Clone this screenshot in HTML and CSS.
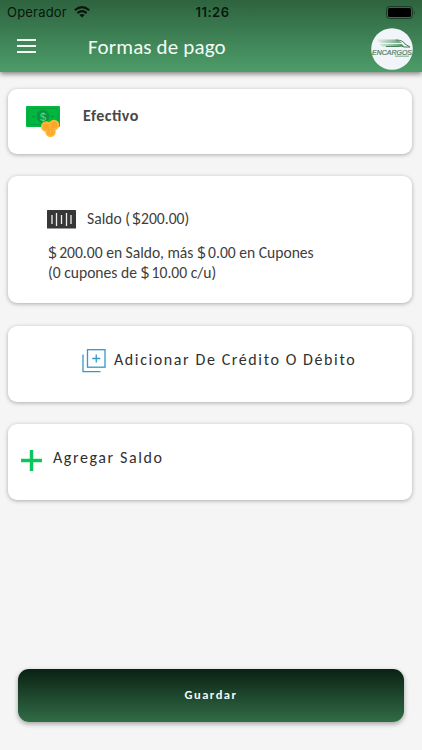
FILE: index.html
```html
<!DOCTYPE html>
<html lang="es">
<head>
<meta charset="utf-8">
<title>Formas de pago</title>
<link rel="stylesheet" href="styles.css">
</head>
<body>
<header class="header">
  <div class="status">
    <div class="carrier"><span>Operador</span>
      <svg width="16" height="12" viewBox="0 0 16 12"><g fill="none" stroke="#07170d" stroke-width="2.1"><path d="M.8 4.3Q8-2 15.2 4.3"/><path d="M3.4 7.1Q8 3.2 12.6 7.1"/></g><path d="M5.4 9Q8 7 10.6 9L8 11.6Z" fill="#07170d"/></svg>
    </div>
    <time class="clock">11:26</time>
    <svg class="battery" width="30" height="13" viewBox="0 0 30 13"><rect x=".5" y=".5" width="26" height="12" rx="3" fill="none" stroke="#173d25"/><rect x="2" y="2" width="23" height="9" rx="1.6" fill="#000"/><path d="M28 4.5Q29.5 6.5 28 8.5Z" fill="#173d25"/></svg>
  </div>
  <div class="toolbar">
    <svg class="menu" width="19" height="14" viewBox="0 0 19 14"><path d="M0 1H19M0 7H19M0 13H19" stroke="#f2fbf4" stroke-width="1.8"/></svg>
    <h1 class="title">Formas de pago</h1>
    <svg class="logo" width="42" height="42" viewBox="0 0 42 42">
      <defs><linearGradient id="speed"><stop offset="0" stop-color="#69a577" stop-opacity=".1"/><stop offset="1" stop-color="#559665"/></linearGradient></defs>
      <circle cx="21" cy="21" r="20.8" fill="#f1f5fa"/>
      <path d="M6 11.5H26L31 15H9V13.5H7ZM9 16H31L33 18.5H11V17.5H9Z" fill="url(#speed)"/>
      <path d="M25 12Q32 12 34 16L39 19H33Q30 17 27 18.5H15" fill="none" stroke="#467e57" stroke-width="1"/>
      <text class="logo-name" x="1" y="26.7" textLength="40" lengthAdjust="spacingAndGlyphs">ENCARGOS</text>
      <path d="M24 28.2H38" stroke="#88b799" stroke-width="1.2"/>
    </svg>
  </div>
</header>
<main class="content">
  <section class="card cash">
    <svg width="36" height="33" viewBox="0 0 36 33"><rect x="1" y="1" width="34" height="21" rx="1" fill="#00b83f"/><path d="M4.5 3.5H31.5Q31.5 5.500 33 6V17Q31.500 17.500 31.500 19.500H4.500Q4.500 17.500 3 17V6Q4.500 5.500 4.500 3.500Z" fill="none" stroke="#079c3b" stroke-width=".8"/><circle cx="18" cy="11.300" r="6.500" fill="#07983b"/><circle cx="8.500" cy="11.300" r="1.200" fill="#07983b"/><circle cx="27.500" cy="11.300" r="1.200" fill="#07983b"/><text class="note-sign" x="18" y="15.500">$</text><g fill="#ffb632"><circle cx="29" cy="20" r="5.300"/><circle cx="21.300" cy="21.500" r="5.300"/><circle cx="25.500" cy="26.700" r="5.300"/></g><g fill="#fda52d"><circle cx="29" cy="20" r="3.200"/><circle cx="21.300" cy="21.500" r="3.200"/><circle cx="25.500" cy="26.700" r="3.200"/></g><path d="M25.500 25V29" stroke="#ffc04a"/></svg>
    <h2 class="label cash-label">Efectivo</h2>
  </section>
  <section class="card balance">
    <div class="balance-head">
      <svg width="30" height="19" viewBox="0 0 30 19"><rect width="29" height="18.500" rx=".5" fill="#373738"/><path d="M5 5V14M9.500 3V16M14.500 5V14M19.500 3V16M24 5V14" stroke="#eee" stroke-width="1.300"/></svg>
      <span class="text saldo">Saldo (<b class="cur">$</b>200.00)</span>
    </div>
    <p class="text detail"><b class="cur">$</b>200.00 en Saldo, más <b class="cur">$</b>0.00 en Cupones<br>(0 cupones de <b class="cur">$</b>10.00 c/u)</p>
  </section>
  <section class="card add-card">
    <svg width="24" height="24" viewBox="0 0 24 24"><g fill="none" stroke="#3498c9" stroke-width="1.300"><rect x="5.500" y=".7" width="17.500" height="17.500"/><path d="M1 5.500V22.700H18.500M14.250 5.500V13.500M10.250 9.500H18.250"/></g></svg>
    <h2 class="label add-label">Adicionar De Crédito O Débito</h2>
  </section>
  <section class="card top-up">
    <svg width="21" height="21" viewBox="0 0 21 21"><path d="M10.500 0V21M0 10.500H21" stroke="#0bc65b" stroke-width="3.400"/></svg>
    <h2 class="label top-up-label">Agregar Saldo</h2>
  </section>
</main>
<footer class="footer"><button class="save">Guardar</button></footer>
</body>
</html>
```
FILE: styles.css
```css
* { box-sizing: border-box; }
body {
  margin: 0;
  height: 750px;
  overflow: hidden;
  display: flex;
  flex-direction: column;
  background: #f5f5f5;
  color: #3d3d3d;
  font-family: Carlito, Lato, sans-serif;
}
svg { display: block; flex: none; }
h1, h2, p { margin: 0; }
.header {
  height: 72px;
  flex: none;
  background: linear-gradient(#2e633f, #4c9d69);
  box-shadow: 0 2px 5px rgba(0, 0, 0, .48);
}
.status {
  height: 24px;
  padding: 0 6px 0 7px;
  display: grid;
  grid-template-columns: 1fr auto 1fr;
  align-items: center;
  color: #07170d;
  font: 13px/24px Inter, sans-serif;
}
.carrier { display: flex; align-items: center; gap: 7px; letter-spacing: .2px; }
.clock { font-weight: 600; letter-spacing: .5px; padding-left: 2px; }
.battery { justify-self: end; }
.toolbar { height: 48px; display: flex; padding: 0 9px 0 17px; }
.menu { margin-top: 15px; }
.title { margin: 9px 0 0 52px; color: #f4fbf5; font-size: 21px; line-height: 28px; font-weight: 400; letter-spacing: .15px; }
.logo { margin: 4px 0 0 auto; }
.logo-name { font: italic 7px "Liberation Sans", sans-serif; fill: #4e7b60; stroke: #4e7b60; stroke-width: .2px; }
.content { padding: 17px 10px 0 8px; display: flex; flex-direction: column; }
.card {
  display: flex;
  background: #fff;
  border-radius: 9px;
  box-shadow: 0 1px 4px rgba(0, 0, 0, .3);
}
.cash { height: 65px; padding: 16px 17px; }
.balance { height: 127px; margin-top: 22px; padding: 34px 39px; flex-direction: column; }
.add-card { height: 76px; margin-top: 23px; padding: 23px 74px; }
.top-up { height: 76px; margin-top: 22px; padding: 26px 13px; }
.label { font-size: 16px; line-height: 20px; font-weight: 400; white-space: nowrap; color: #303030; }
.note-sign { font: 11px Inter, sans-serif; text-anchor: middle; fill: #5fd47d; }
.cash-label { margin: 1px 0 0 22px; font-weight: 700; letter-spacing: .5px; font-feature-settings: "liga" 1; color: #484848; }
.add-label { margin: 1px 0 0 8px; letter-spacing: 1.6px; }
.top-up-label { margin: -2px 0 0 11px; letter-spacing: 1.6px; }
.text { font-size: 15.6px; white-space: nowrap; line-height: 20px; }
.cur { font: 400 16px/16px "Open Sans", sans-serif; margin-right: 2px; }
.balance-head { display: flex; height: 20px; }
.saldo { margin: -1px 0 0 10px; }
.saldo .cur { margin: 0 0 0 2px; }
.detail { margin: 14px 0 0 1px; }
.footer { margin-top: auto; padding: 0 18px 28px; }
.save {
  display: block;
  width: 386px;
  height: 53px;
  padding: 0 0 2px;
  border: 0;
  border-radius: 11px;
  background: linear-gradient(#0a2114, #316c46);
  box-shadow: 0 2px 5px rgba(0, 0, 0, .35);
  color: #f4fbf5;
  font: bold 12.5px Carlito, Lato, sans-serif;
  letter-spacing: 1.5px;
}
```
